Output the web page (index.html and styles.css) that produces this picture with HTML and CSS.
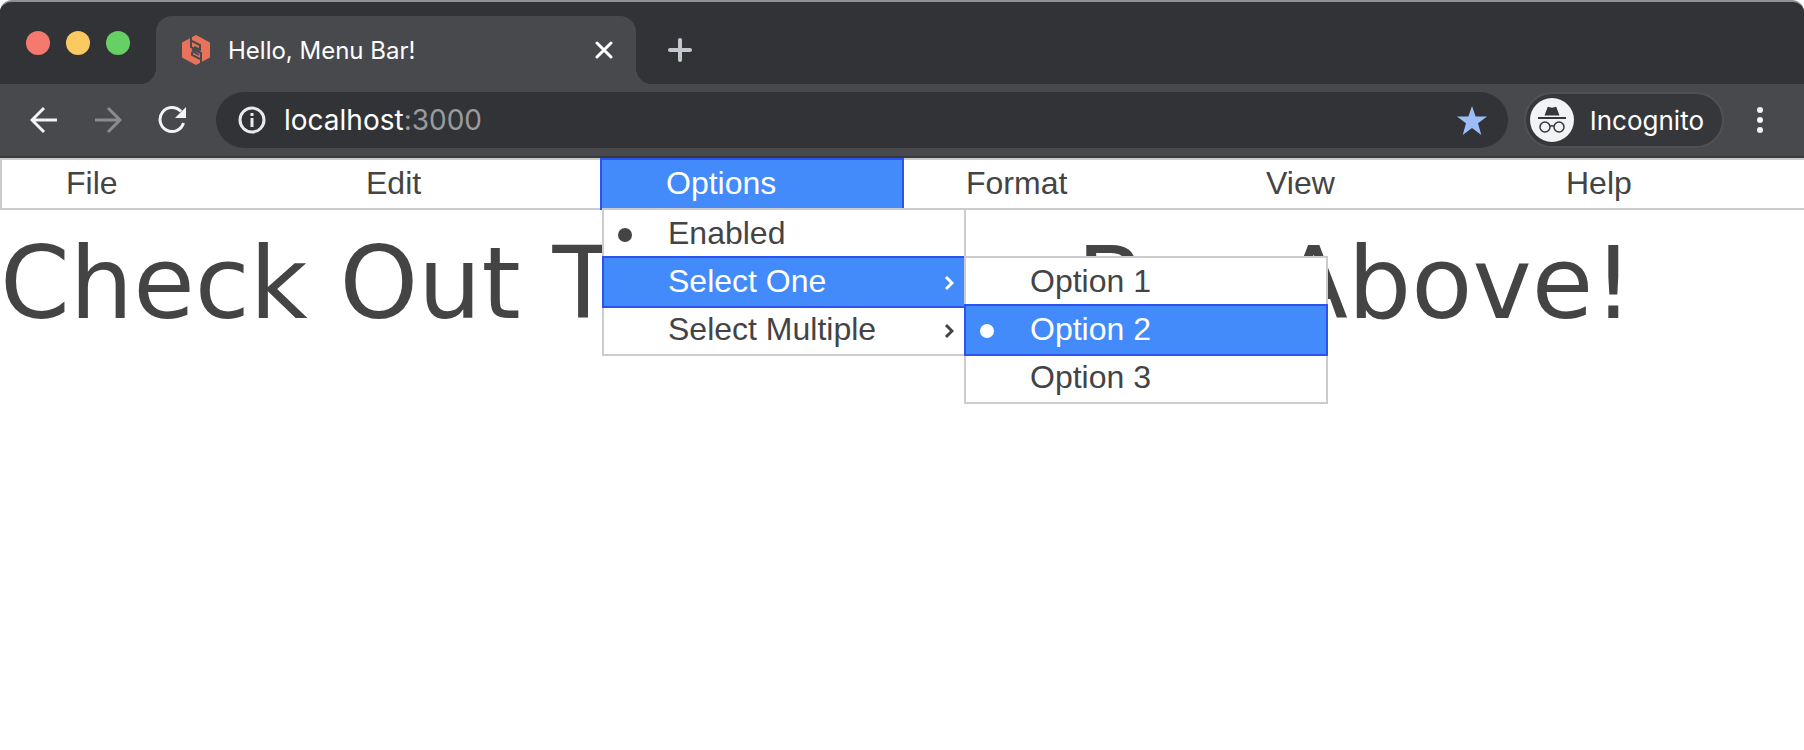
FILE: index.html
```html
<!DOCTYPE html>
<html lang="en">
<head>
<meta charset="utf-8">
<title>Hello, Menu Bar!</title>
<link rel="stylesheet" href="styles.css">
</head>
<body>
<header class="browser">
  <div class="tabstrip">
    <div class="lights">
      <button class="light light-close" aria-label="Close window"></button>
      <button class="light light-min" aria-label="Minimize window"></button>
      <button class="light light-max" aria-label="Maximize window"></button>
    </div>
    <div class="tab">
      <svg class="favicon" width="28" height="30" viewBox="0 0 28 30" aria-hidden="true">
        <path fill="#e8735a" d="M14 0 28 7.500V22.500L14 30 0 22.500V7.500Z"/>
        <path fill="none" stroke="#48494c" stroke-width="2" d="M9 2V12L18 17M10 6 18 10V14M12 12 19 15M19 28V18L10 14M18 24 10 20V17M17 20 10 16"/>
      </svg>
      <span class="tab-title">Hello, Menu Bar!</span>
      <button class="icon-btn" aria-label="Close tab">
        <svg width="18" height="18" viewBox="0 0 18 18"><path d="M2 2 16 16M16 2 2 16" fill="none" stroke="#fff" stroke-width="3" stroke-linecap="round"/></svg>
      </button>
    </div>
    <button class="icon-btn new-tab" aria-label="New tab">
      <svg width="24" height="24" viewBox="0 0 24 24"><path d="M12 2V22M2 12H22" fill="none" stroke="#c5c8ce" stroke-width="4" stroke-linecap="round"/></svg>
    </button>
  </div>
  <div class="toolbar">
    <nav class="nav">
      <button class="icon-btn" aria-label="Back">
        <svg width="28" height="28" viewBox="0 0 28 28"><path d="M27 14H3M14 2 2 14 14 26" fill="none" stroke="#f1f3f4" stroke-width="3"/></svg>
      </button>
      <button class="icon-btn" aria-label="Forward">
        <svg width="28" height="28" viewBox="0 0 28 28"><path d="M1 14H25M14 2 26 14 14 26" fill="none" stroke="#8b8c90" stroke-width="3"/></svg>
      </button>
      <button class="icon-btn" aria-label="Reload">
        <svg width="28" height="28" viewBox="0 0 28 28"><path d="M25.500 17A12 12 0 1 1 23 5.500" fill="none" stroke="#f1f3f4" stroke-width="3"/><path d="M28 1V12H17Z" fill="#f1f3f4"/></svg>
      </button>
    </nav>
    <div class="omnibox">
      <svg width="28" height="28" viewBox="0 0 28 28" aria-hidden="true"><circle cx="14" cy="14" r="12" fill="none" stroke="#e8eaed" stroke-width="3"/><path d="M14 12V21M14 7V10" stroke="#e8eaed" stroke-width="3"/></svg>
      <a class="url" href="#"><span>localhost</span><span class="port">:3000</span></a>
      <button class="icon-btn" aria-label="Bookmark">
        <svg width="30" height="29" viewBox="0 0 30 29"><path fill="#9dbdf8" d="M15 0 18.600 10.500H30L21 17.200 24.300 29 15 22 5.700 29 9 17.200 0 10.500H11.400Z"/></svg>
      </button>
    </div>
    <button class="incognito">
      <svg width="44" height="44" viewBox="0 0 44 44" aria-hidden="true">
        <circle cx="22" cy="22" r="22" fill="#f1f3f4"/>
        <path fill="#36373b" d="M14.500 17.500 17.500 9.500Q18 8.500 19 9L22 9.700 25 9Q26 8.500 26.500 9.500L29.500 17.500ZM8 19H36V21H8Z"/>
        <g fill="none" stroke="#36373b" stroke-width="1.500"><circle cx="15" cy="29" r="5"/><circle cx="29" cy="29" r="5"/><path d="M20 28.500Q22 27 24 28.500"/></g>
      </svg>
      <span>Incognito</span>
    </button>
    <button class="icon-btn more" aria-label="More">
      <svg width="6" height="26" viewBox="0 0 6 26"><g fill="#f1f3f4"><circle cx="3" cy="3" r="3"/><circle cx="3" cy="13" r="3"/><circle cx="3" cy="23" r="3"/></g></svg>
    </button>
  </div>
</header>
<main>
  <ul class="menubar" role="menubar">
    <li class="item" role="none"><button class="label" role="menuitem">File</button></li>
    <li class="item" role="none"><button class="label" role="menuitem">Edit</button></li>
    <li class="item" role="none">
      <button class="label active" role="menuitem">Options</button>
      <ul class="menu dropdown" role="menu">
        <li class="item" role="none"><button class="label checked" role="menuitemcheckbox" aria-checked="true">Enabled</button></li>
        <li class="item" role="none">
          <button class="label active" role="menuitem">Select One
            <svg class="chevron" width="10" height="16" viewBox="0 0 10 16" aria-hidden="true"><path d="M2 2 8 8 2 14"/></svg>
          </button>
          <ul class="menu submenu" role="menu">
            <li class="item" role="none"><button class="label" role="menuitemradio" aria-checked="false">Option 1</button></li>
            <li class="item" role="none"><button class="label active checked" role="menuitemradio" aria-checked="true">Option 2</button></li>
            <li class="item" role="none"><button class="label" role="menuitemradio" aria-checked="false">Option 3</button></li>
          </ul>
        </li>
        <li class="item" role="none">
          <button class="label" role="menuitem">Select Multiple
            <svg class="chevron" width="10" height="16" viewBox="0 0 10 16" aria-hidden="true"><path d="M2 2 8 8 2 14"/></svg>
          </button>
        </li>
      </ul>
    </li>
    <li class="item" role="none"><button class="label" role="menuitem">Format</button></li>
    <li class="item" role="none"><button class="label" role="menuitem">View</button></li>
    <li class="item" role="none"><button class="label" role="menuitem">Help</button></li>
  </ul>
  <h1 class="headline">Check Out The Menu Bar Above!</h1>
</main>
</body>
</html>
```
FILE: styles.css
```css
* {
  box-sizing: border-box;
}

body {
  min-height: 100vh;
  margin: 0;
  background: #fff;
  color: #444;
  font-family: "Liberation Sans", Arial, sans-serif;
}

button {
  margin: 0;
  padding: 0;
  border: 0;
  background: none;
  color: inherit;
  font: inherit;
}

svg {
  display: block;
  flex: none;
}

.browser {
  border-top: 2px solid #8e9092;
  border-bottom: 2px solid #38393b;
  border-radius: 12px 12px 0 0;
  background: #48494c;
  color: #fff;
  font-family: Inter, Roboto, sans-serif;
  overflow: hidden;
}

.tabstrip {
  display: flex;
  align-items: flex-end;
  height: 82px;
  background: #323337;
}

.lights {
  display: flex;
  gap: 16px;
  align-self: center;
  width: 156px;
  padding-left: 26px;
}

.light {
  width: 24px;
  height: 24px;
  border-radius: 50%;
}

.light-close { background: #f5796d; }
.light-min { background: #fac961; }
.light-max { background: #67d064; }

.tab {
  position: relative;
  display: flex;
  align-items: center;
  gap: 18px;
  width: 480px;
  height: 68px;
  padding: 0 23px 0 26px;
  border-radius: 16px 16px 0 0;
  background: #48494c;
}

.tab::before,
.tab::after {
  content: "";
  position: absolute;
  bottom: 0;
  width: 16px;
  height: 16px;
}

.tab::before {
  right: 100%;
  background: radial-gradient(circle at 0 0, #323337 16px, #48494c 16px);
}

.tab::after {
  left: 100%;
  background: radial-gradient(circle at 100% 0, #323337 16px, #48494c 16px);
}

.tab-title {
  flex: 1;
  font-size: 24px;
}

.icon-btn {
  display: flex;
  align-items: center;
  justify-content: center;
}

.new-tab {
  height: 68px;
  margin-left: 32px;
}

.toolbar {
  display: flex;
  align-items: center;
  height: 72px;
  padding: 0 41px 0 30px;
}

.nav {
  display: flex;
  gap: 36px;
  margin-right: 30px;
}

.omnibox {
  display: flex;
  flex: 1;
  align-items: center;
  gap: 18px;
  height: 56px;
  padding: 0 21px 0 22px;
  border-radius: 28px;
  background: #323337;
}

.url {
  flex: 1;
  color: #fff;
  font-size: 28px;
  text-decoration: none;
}

.port {
  color: #9a9b9e;
}

.incognito {
  display: flex;
  align-items: center;
  gap: 16px;
  height: 56px;
  margin-left: 16px;
  padding: 0 18px 0 4px;
  border: 2px solid #505155;
  border-radius: 28px;
  background: #36373b;
  font-size: 26px;
}

.more {
  margin-left: 33px;
}

.menubar,
.menu {
  margin: 0;
  padding: 0;
  border: 2px solid #ccc;
  background: #fff;
  list-style: none;
  font-size: 32px;
  line-height: 46px;
}

.menubar {
  display: flex;
  border-right: 0;
}

.item {
  position: relative;
}

.menubar > .item {
  flex: 0 0 300px;
}

.label {
  position: relative;
  display: flex;
  align-items: center;
  justify-content: space-between;
  width: 100%;
  padding: 0 10px 2px 64px;
  text-align: left;
  white-space: nowrap;
}

.label.active {
  background: #438afa;
  color: #fff;
  box-shadow: 0 0 0 2px #2a52f5;
}

.label.checked::before {
  content: "";
  position: absolute;
  top: 18px;
  left: 14px;
  width: 14px;
  height: 14px;
  border-radius: 50%;
  background: currentColor;
}

.chevron {
  margin-top: 4px;
  fill: none;
  stroke: currentColor;
  stroke-width: 3;
}

.menu {
  position: absolute;
  z-index: 1;
  width: 364px;
}

.dropdown {
  top: 100%;
  left: 0;
}

.submenu {
  top: -2px;
  left: 100%;
}

.headline {
  margin: 14px 0 0;
  font-family: Verdana, "DejaVu Sans", sans-serif;
  font-size: 100px;
  font-weight: 400;
  line-height: 120px;
  white-space: nowrap;
}
```
